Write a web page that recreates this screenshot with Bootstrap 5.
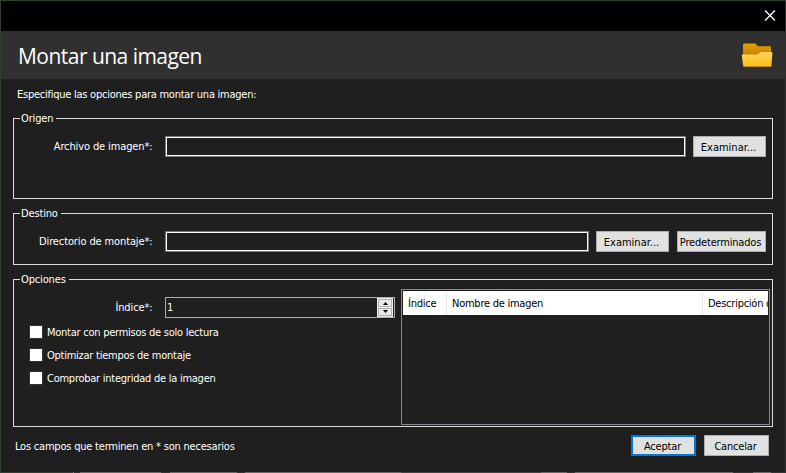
<!DOCTYPE html>
<html lang="es" data-bs-theme="dark">
<head>
<meta charset="utf-8">
<meta name="viewport" content="width=device-width, initial-scale=1">
<title>Montar una imagen</title>
<link href="https://cdn.jsdelivr.net/npm/bootstrap@5.3.0/dist/css/bootstrap.min.css" rel="stylesheet">
<style>
  body { width: 786px; height: 473px; overflow: hidden; background: #1f1f1f; color: #fff;
    font: 11px/14px "DejaVu Sans Condensed", "DejaVu Sans", sans-serif; font-stretch: condensed; letter-spacing: -.25px; }
  button, input { letter-spacing: inherit; }
  .dialog { height: 473px; border: 1px solid #2d412d; border-right-color: #303030; border-bottom: 0; }
  .titlebar { height: 30px; background: #000; padding-right: 9px; }
  .close-btn { width: 12px; height: 12px; background: none; border: 0; line-height: 0; }
  .banner { height: 48px; background: #303030; padding: 0 11px 0 17px; }
  .banner h1 { font: 400 21px/30px "Open Sans", "Noto Sans", sans-serif; letter-spacing: -.53px; margin: 2px 0 0; }
  .intro { padding: 9px 0 0 16px; height: 39px; }
  .group { margin: 0 12px; border: 1px solid #dcdcdc; }
  .group-title { position: absolute; top: -7px; left: 6px; padding: 0 3px 0 1px; background: #1f1f1f; letter-spacing: -.15px; }
  .origin { height: 81px; margin-bottom: 14px; padding: 17px 6px 0 0; }
  .target { height: 52px; margin-bottom: 14px; padding: 17px 6px 0 0; }
  .options { height: 148px; }
  .field-label { width: 138.5px; margin-right: 12.5px; text-align: right; line-height: 21px; letter-spacing: -.12px; }
  .field { height: 21px; min-width: 0; background: #1f1f1f; border: 1px solid #7a7a7a; outline: 1px solid #fff; outline-offset: -2px; color: #fff; padding: 0 3px; border-radius: 0; margin-right: -1px; }
  .push { height: 21px; background: #e1e1e1; border: 1px solid #adadad; border-radius: 0; color: #000; padding: 2px 2px 0 0; white-space: nowrap; line-height: 17px; text-align: center; letter-spacing: -.18px; }
  .w-browse { width: 73px; letter-spacing: 0; } .w-default { width: 89px; } .w-end { width: 65px; }
  .push.primary { border: 2px solid #0078d7; line-height: 15px; }
  .spin { width: 230px; height: 21px; border: 1px solid #adadad; padding: 0 1px 0 1px; }
  .spin input { width: 100px; height: 18px; background: none; border: 0; padding: 0; color: #fff; }
  .spin-keys { width: 16px; height: 19px; background: #f0f0f0; padding: 1px; }
  .spin-keys button { height: 8px; padding: 0; background: #e8e8e8; border: 1px solid #adadad; line-height: 0; }
  .left-pane { width: 387px; padding-top: 17px; }
  .checks { padding: 7px 0 0 15px; }
  .checks label { height: 23px; line-height: 16px; }
  .checks input { appearance: none; width: 14px; height: 14px; background: #fff; border: 1px solid #333; margin: 0 4px 0 0; }
  .list { width: 369px; height: 136px; margin-top: 9px; border: 1px solid #828790; padding: 1px; overflow: hidden; }
  .list-head { height: 24px; background: #fff; color: #000; line-height: 25px; overflow: hidden; white-space: nowrap; }
  .list-head span { flex: none; padding-left: 5px; border-right: 1px solid #e5e5e5; }
  .col-index { width: 44px; } .col-name { width: 256px; } .col-desc { width: 150px; }
  .footer-bar { padding: 8px 16px 0 14px; height: 45px; }
  .footer-note { padding-top: 5px; letter-spacing: -.21px; }
  .behind { height: 1px; background: linear-gradient(90deg, #2d412d 60px, #3a3a3a 60px 72px, #777 72px 73px, #333 73px 79px, #686868 79px 160px, #333 160px 169px, #686868 169px 236px, #333 236px 244px, #686868 244px 400px, #444 400px 540px, #686868 540px 566px, #333 566px 574px, #686868 574px 732px, #333 732px 752px, #686868 752px 770px, #333 770px); }
</style>
<script src="https://cdn.jsdelivr.net/npm/bootstrap@5.3.0/dist/js/bootstrap.bundle.min.js"></script>
</head>
<body>
<main class="dialog d-flex flex-column">
  <div class="titlebar d-flex justify-content-end align-items-center flex-shrink-0">
    <button class="close-btn p-0" aria-label="Cerrar"><svg width="12" height="12" viewBox="0 0 12 12" fill="none" stroke="#fff" stroke-width="1.3"><path d="M1 .5l10 10M11 .5L1 10.500"/></svg></button>
  </div>
  <header class="banner d-flex justify-content-between align-items-center flex-shrink-0">
    <h1>Montar una imagen</h1>
    <svg width="34" height="28" viewBox="0 0 34 28">
      <defs>
        <linearGradient id="back" x2="0" y2="1"><stop stop-color="#e6a000"/><stop offset="1" stop-color="#b87800"/></linearGradient>
        <linearGradient id="front" x2="0" y2="1"><stop stop-color="#ffd667"/><stop offset=".5" stop-color="#ffc933"/><stop offset="1" stop-color="#fcc024"/></linearGradient>
      </defs>
      <path d="M3 3.500q0-1 1-1h10.500q1 0 1.600 .8l1.500 1.900h12.400q1 0 1 1V18H3z" fill="url(#back)"/>
      <path d="M2.500 13.500h14.500q1 0 1.800-.7l1.200-1q.8-.7 1.800-.7h9.700q1 0 .9 1l-.9 12.400q-.1 1-1.100 1H4.200q-1 0-1.100-1L1.800 14.500q-.1-1 .7-1z" fill="url(#front)"/>
      <path d="M3.200 24.500q.2 1 1 1h26.200q1 0 1.100-1" fill="none" stroke="#c28d13" stroke-width=".8"/>
    </svg>
  </header>
  <div class="intro flex-shrink-0">Especifique las opciones para montar una imagen:</div>

  <section class="group origin position-relative flex-shrink-0">
    <span class="group-title">Origen</span>
    <div class="d-flex">
      <label class="field-label" for="src">Archivo de imagen*:</label>
      <input class="field flex-grow-1" id="src" type="text">
      <button class="push w-browse ms-2">Examinar...</button>
    </div>
  </section>

  <section class="group target position-relative flex-shrink-0">
    <span class="group-title">Destino</span>
    <div class="d-flex">
      <label class="field-label" for="dst">Directorio de montaje*:</label>
      <input class="field flex-grow-1" id="dst" type="text">
      <button class="push w-browse ms-2">Examinar...</button>
      <button class="push w-default ms-2">Predeterminados</button>
    </div>
  </section>

  <section class="group options position-relative d-flex flex-shrink-0">
    <span class="group-title">Opciones</span>
    <div class="left-pane flex-shrink-0">
      <div class="d-flex">
        <label class="field-label" for="idx">Índice*:</label>
        <div class="spin d-flex justify-content-between">
          <input id="idx" type="text" value="1">
          <div class="spin-keys d-flex flex-column justify-content-between">
            <button aria-label="Subir"><svg width="7" height="4" viewBox="0 0 7 4"><path d="M1 4L3.500 1 6 4z"/></svg></button>
            <button aria-label="Bajar"><svg width="7" height="4" viewBox="0 0 7 4"><path d="M1 0L3.500 3 6 0z"/></svg></button>
          </div>
        </div>
      </div>
      <div class="checks d-flex flex-column">
        <label class="d-flex"><input type="checkbox"><span>Montar con permisos de solo lectura</span></label>
        <label class="d-flex"><input type="checkbox"><span>Optimizar tiempos de montaje</span></label>
        <label class="d-flex"><input type="checkbox"><span>Comprobar integridad de la imagen</span></label>
      </div>
    </div>
    <div class="list flex-shrink-0">
      <div class="list-head d-flex">
        <span class="col-index">Índice</span><span class="col-name">Nombre de imagen</span><span class="col-desc">Descripción de imagen</span>
      </div>
    </div>
  </section>

  <footer class="footer-bar d-flex justify-content-between flex-shrink-0">
    <span class="footer-note">Los campos que terminen en * son necesarios</span>
    <div class="d-flex gap-2">
      <button class="push primary w-end">Aceptar</button>
      <button class="push w-end">Cancelar</button>
    </div>
  </footer>
  <div class="behind flex-shrink-0"></div>
</main>
</body>
</html>
